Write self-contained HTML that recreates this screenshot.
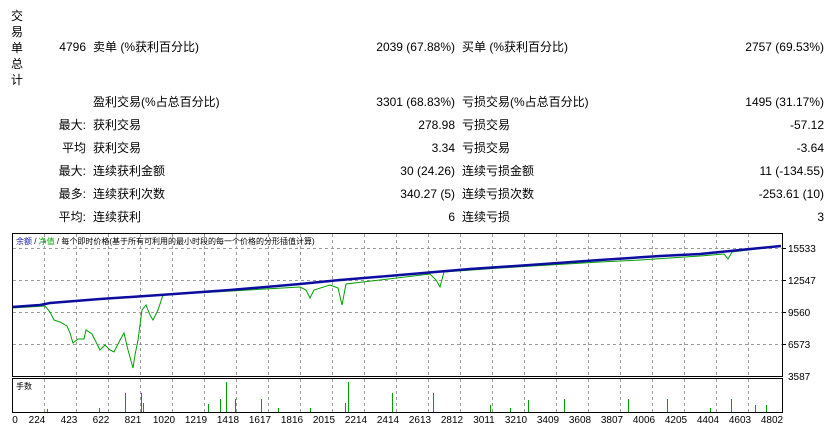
<!DOCTYPE html>
<html style="width:839px;height:427px;overflow:hidden"><head><meta charset="utf-8"><style>
body{margin:0;width:839px;height:427px;background:#fff;overflow:hidden;font-family:"Liberation Sans","Noto Sans CJK SC",sans-serif;font-size:12px;color:#000;position:relative}
.t{position:absolute;white-space:nowrap;line-height:14px}
.r{text-align:right}
</style></head><body>
<div class="t" style="left:11px;top:8px;width:14px;line-height:16px">交<br>易<br>单<br>总<br>计</div>
<div class="t r" style="left:40px;top:40px;width:46px">4796</div>
<div class="t" style="left:93px;top:40px">卖单 (%获利百分比)</div>
<div class="t r" style="left:300px;top:40px;width:155px">2039 (67.88%)</div>
<div class="t" style="left:462px;top:40px">买单 (%获利百分比)</div>
<div class="t r" style="left:660px;top:40px;width:164px">2757 (69.53%)</div>

<div class="t" style="left:93px;top:95px">盈利交易(%占总百分比)</div>
<div class="t r" style="left:300px;top:95px;width:155px">3301 (68.83%)</div>
<div class="t" style="left:462px;top:95px">亏损交易(%占总百分比)</div>
<div class="t r" style="left:660px;top:95px;width:164px">1495 (31.17%)</div>

<div class="t r" style="left:40px;top:118px;width:46px">最大:</div>
<div class="t" style="left:93px;top:118px">获利交易</div>
<div class="t r" style="left:300px;top:118px;width:155px">278.98</div>
<div class="t" style="left:462px;top:118px">亏损交易</div>
<div class="t r" style="left:660px;top:118px;width:164px">-57.12</div>

<div class="t r" style="left:40px;top:141px;width:46px">平均</div>
<div class="t" style="left:93px;top:141px">获利交易</div>
<div class="t r" style="left:300px;top:141px;width:155px">3.34</div>
<div class="t" style="left:462px;top:141px">亏损交易</div>
<div class="t r" style="left:660px;top:141px;width:164px">-3.64</div>

<div class="t r" style="left:40px;top:164px;width:46px">最大:</div>
<div class="t" style="left:93px;top:164px">连续获利金额</div>
<div class="t r" style="left:300px;top:164px;width:155px">30 (24.26)</div>
<div class="t" style="left:462px;top:164px">连续亏损金额</div>
<div class="t r" style="left:660px;top:164px;width:164px">11 (-134.55)</div>

<div class="t r" style="left:40px;top:187px;width:46px">最多:</div>
<div class="t" style="left:93px;top:187px">连续获利次数</div>
<div class="t r" style="left:300px;top:187px;width:155px">340.27 (5)</div>
<div class="t" style="left:462px;top:187px">连续亏损次数</div>
<div class="t r" style="left:660px;top:187px;width:164px">-253.61 (10)</div>

<div class="t r" style="left:40px;top:210px;width:46px">平均:</div>
<div class="t" style="left:93px;top:210px">连续获利</div>
<div class="t r" style="left:300px;top:210px;width:155px">6</div>
<div class="t" style="left:462px;top:210px">连续亏损</div>
<div class="t r" style="left:660px;top:210px;width:164px">3</div>

<svg style="position:absolute;left:0;top:0;display:block" width="839" height="427">
<g stroke="#999" stroke-dasharray="3,3" stroke-width="1" fill="none">
<path d="M13 248.5H782M13 280.5H782M13 312.5H782M13 344.5H782"/>
<path d="M44.5 234V376M76.5 234V376M108.5 234V376M140.5 234V376M172.5 234V376M204.5 234V376M236.5 234V376M268.5 234V376M300.5 234V376M332.5 234V376M364.5 234V376M396.5 234V376M428.5 234V376M460.5 234V376M492.5 234V376M524.5 234V376M556.5 234V376M588.5 234V376M620.5 234V376M652.5 234V376M684.5 234V376M716.5 234V376M748.5 234V376"/>
<path d="M44.5 379V412M76.5 379V412M108.5 379V412M140.5 379V412M172.5 379V412M204.5 379V412M236.5 379V412M268.5 379V412M300.5 379V412M332.5 379V412M364.5 379V412M396.5 379V412M428.5 379V412M460.5 379V412M492.5 379V412M524.5 379V412M556.5 379V412M588.5 379V412M620.5 379V412M652.5 379V412M684.5 379V412M716.5 379V412M748.5 379V412"/>
</g>
<polyline fill="none" stroke="#00a000" stroke-width="1" points="12,308 45,306 50,312 54,320 60,322 67,326 70,333 73,343 78,339 84,339 86,330 92,334 100,350 105,345 110,350 114,352 120,340 124,333 128,350 133,368 135,355 138,340 142,310 146,305 150,315 153,320 158,310 163,295 300,287 306,290 310,298 314,290 330,285 338,288 342,305 346,284 430,274 436,280 440,287 444,272 500,268 600,262 640,260 700,256 724,254 728,259 732,252 781,246"/>
<polyline fill="none" stroke="#0c0ca0" stroke-width="2.5" points="12,307 40,305 50,303 100,299 160,295 230,290 300,284 340,280 400,275 470,269 530,265 600,260 660,256 700,254 740,250 781,246"/>
<rect x="12.5" y="233.5" width="770" height="143" fill="none" stroke="#000"/>
<rect x="12.5" y="378.5" width="770" height="34" fill="none" stroke="#000"/>
<g stroke="#00a000" stroke-width="1">
<line x1="125.5" y1="412" x2="125.5" y2="393"/><line x1="141.5" y1="412" x2="141.5" y2="393"/><line x1="143.5" y1="412" x2="143.5" y2="403"/><line x1="220.5" y1="412" x2="220.5" y2="399"/><line x1="226.5" y1="412" x2="226.5" y2="382"/><line x1="235.5" y1="412" x2="235.5" y2="399"/><line x1="261.5" y1="412" x2="261.5" y2="399"/><line x1="208.5" y1="412" x2="208.5" y2="404"/><line x1="348.5" y1="412" x2="348.5" y2="382"/><line x1="345.5" y1="412" x2="345.5" y2="403"/><line x1="392.5" y1="412" x2="392.5" y2="393"/><line x1="433.5" y1="412" x2="433.5" y2="393"/><line x1="490.5" y1="412" x2="490.5" y2="405"/><line x1="528.5" y1="412" x2="528.5" y2="400"/><line x1="564.5" y1="412" x2="564.5" y2="399"/><line x1="628.5" y1="412" x2="628.5" y2="399"/><line x1="667.5" y1="412" x2="667.5" y2="399"/><line x1="731.5" y1="412" x2="731.5" y2="399"/><line x1="755.5" y1="412" x2="755.5" y2="405"/><line x1="766.5" y1="412" x2="766.5" y2="405"/><line x1="99.5" y1="412" x2="99.5" y2="408"/><line x1="47.5" y1="412" x2="47.5" y2="409"/><line x1="310.5" y1="412" x2="310.5" y2="408"/><line x1="278.5" y1="412" x2="278.5" y2="408"/><line x1="510.5" y1="412" x2="510.5" y2="408"/><line x1="710.5" y1="412" x2="710.5" y2="408"/></g>
<g stroke="#000"><line x1="783" y1="248.5" x2="786" y2="248.5"/><line x1="783" y1="280.5" x2="786" y2="280.5"/><line x1="783" y1="312.5" x2="786" y2="312.5"/><line x1="783" y1="344.5" x2="786" y2="344.5"/></g>
<g font-size="10" font-family="Liberation Sans,sans-serif" fill="#000">
<text x="788" y="252">15533</text><text x="788" y="284">12547</text><text x="788" y="316">9560</text><text x="788" y="348">6573</text><text x="788" y="380">3587</text>
<g text-anchor="middle"><text x="15" y="423">0</text><text x="37" y="423">224</text><text x="69" y="423">423</text><text x="101" y="423">622</text><text x="133" y="423">821</text><text x="164" y="423">1020</text><text x="196" y="423">1219</text><text x="228" y="423">1418</text><text x="260" y="423">1617</text><text x="292" y="423">1816</text><text x="324" y="423">2015</text><text x="356" y="423">2214</text><text x="388" y="423">2414</text><text x="420" y="423">2613</text><text x="452" y="423">2812</text><text x="484" y="423">3011</text><text x="516" y="423">3210</text><text x="548" y="423">3409</text><text x="580" y="423">3608</text><text x="612" y="423">3807</text><text x="644" y="423">4006</text><text x="676" y="423">4205</text><text x="708" y="423">4404</text><text x="740" y="423">4603</text><text x="772" y="423">4802</text></g>
</g>
<g font-size="8" font-family="Liberation Sans,Noto Sans CJK SC,sans-serif"><text x="16" y="244"><tspan fill="#1414a8">余额</tspan><tspan fill="#000"> / </tspan><tspan fill="#00a000">净值</tspan><tspan fill="#000"> / 每个即时价格(基于所有可利用的最小时段的每一个价格的分形插值计算)</tspan></text>
<text x="16" y="389" fill="#000">手数</text></g>
</svg>
</body></html>
